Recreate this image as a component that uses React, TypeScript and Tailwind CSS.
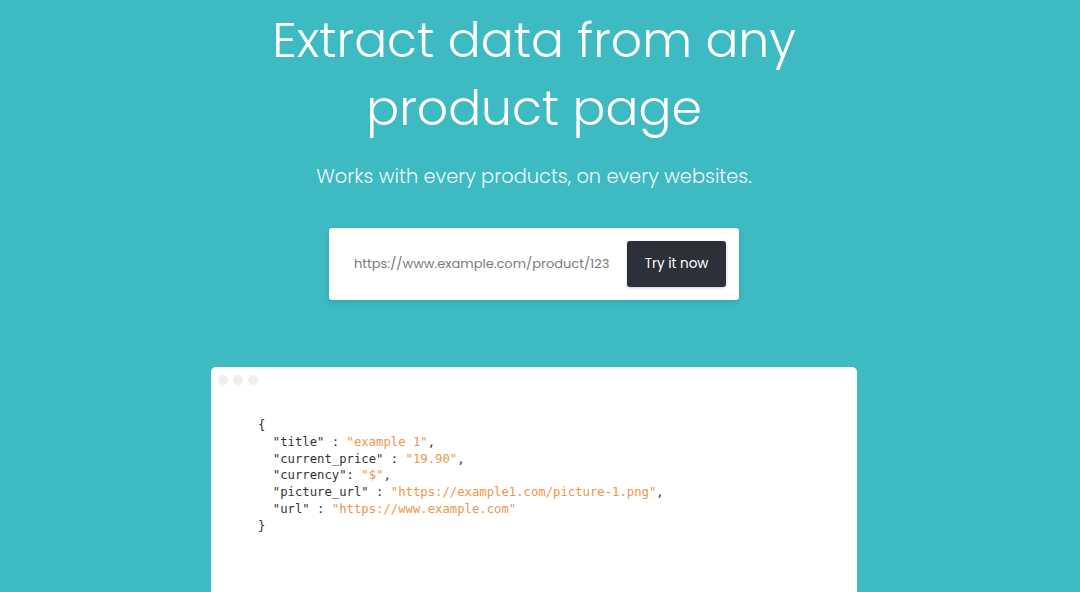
import React from "react";

const sans = { fontFamily: '"Poppins", "Lato", "Open Sans", sans-serif' };

function S({ children }: { children: React.ReactNode }) {
  return <span className="text-[#f0954a]">{children}</span>;
}

export default function App() {
  return (
    <div
      className="h-[592px] w-full overflow-hidden bg-[#3dbac2] flex flex-col items-center pr-[12px]"
      style={sans}
    >
      <h1 className="mt-[6px] text-white font-light text-[48.8px] leading-[68px] text-center">
        Extract data from any
        <br />
        product page
      </h1>
      <p className="mt-[21px] text-white/95 font-light text-[19.4px] leading-[28px] text-center">
        Works with every products, on every websites.
      </p>
      <div className="mt-[37px] w-[410px] h-[72px] bg-white rounded-[3px] shadow-[0_2px_6px_rgba(0,0,0,0.12)] flex items-center justify-between pl-[25px] pr-[13px]">
        <span className="text-[#7a7a7a] text-[13px]">https://www.example.com/product/123</span>
        <button className="w-[99px] h-[46px] bg-[#2d3039] text-white rounded-[3px] text-[13.5px] shadow-[0_1px_3px_rgba(0,0,0,0.2)]">
          Try it now
        </button>
      </div>
      <div className="mt-[67px] w-[646px] flex-1 bg-white rounded-t-[5px] flex flex-col">
        <div className="flex gap-[5px] pt-[8px] pl-[7px]">
          <span className="w-[10px] h-[10px] rounded-full bg-[#eeeeee]" />
          <span className="w-[10px] h-[10px] rounded-full bg-[#eeeeee]" />
          <span className="w-[10px] h-[10px] rounded-full bg-[#eeeeee]" />
        </div>
        <pre
          className="mt-[32px] ml-[47px] text-[12.25px] leading-[16.8px] text-[#333]"
          style={{ fontFamily: '"DejaVu Sans Mono", monospace' }}
        >
{"{\n"}
{'  "title" : '}<S>"example 1"</S>{",\n"}
{'  "current_price" : '}<S>"19.90"</S>{",\n"}
{'  "currency": '}<S>"$"</S>{",\n"}
{'  "picture_url" : '}<S>"https://example1.com/picture-1.png"</S>{",\n"}
{'  "url" : '}<S>"https://www.example.com"</S>{"\n"}
{"}"}
        </pre>
      </div>
    </div>
  );
}
